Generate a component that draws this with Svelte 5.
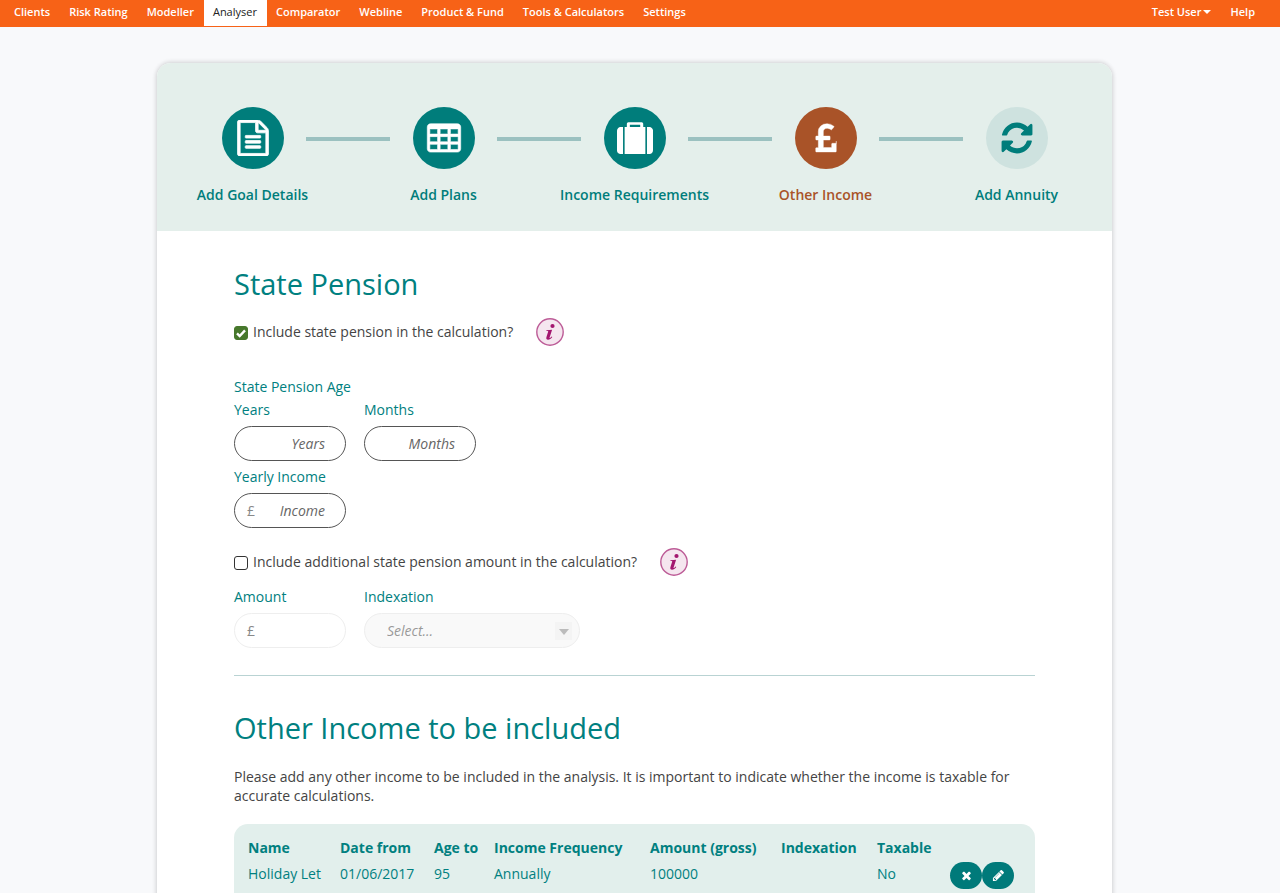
<script>
  const nav = ['Clients', 'Risk Rating', 'Modeller', 'Analyser', 'Comparator', 'Webline', 'Product & Fund', 'Tools & Calculators', 'Settings'];

  const cell = (x, y) => `M${x + 384} ${y + 224}v-192q0-14-9-23t-23-9h-320q-14 0-23 9t-9 23v192q0 14 9 23t23 9h320q14 0 23-9t9-23z`;
  const cells = [384, 768, 1152].flatMap((y) => [192, 704, 1216].map((x) => cell(x, y))).join('');

  const steps = [
    {
      label: 'Add Goal Details',
      state: 'done',
      view: '0 0 1792 1792',
      weight: 40,
      icon: 'M1596 380q28 28 48 76t20 88v1152q0 40-28 68t-68 28h-1344q-40 0-68-28t-28-68v-1600q0-40 28-68t68-28h896q40 0 88 20t76 48zm-444-244v376h376q-10-29-22-41l-313-313q-12-12-41-22zm384 1528v-1024h-416q-40 0-68-28t-28-68v-416h-768v1536h1280zm-1024-864q0-14 9-23t23-9h704q14 0 23 9t9 23v64q0 14-9 23t-23 9h-704q-14 0-23-9t-9-23v-64zm736 224q14 0 23 9t9 23v64q0 14-9 23t-23 9h-704q-14 0-23-9t-9-23v-64q0-14 9-23t23-9h704zm0 256q14 0 23 9t9 23v64q0 14-9 23t-23 9h-704q-14 0-23-9t-9-23v-64q0-14 9-23t23-9h704z'
    },
    {
      label: 'Add Plans',
      state: 'done',
      view: '0 -60 1792 1792',
      weight: 30,
      icon: cells + 'M1728 288v1088q0 66-47 113t-113 47h-1344q-66 0-113-47t-47-113v-1088q0-66 47-113t113-47h1344q66 0 113 47t47 113z'
    },
    {
      label: 'Income Requirements',
      state: 'done',
      view: '0 0 1792 1792',
      weight: 0,
      icon: 'M640 350h515v-110h-515zM300 350v1342h-120q-75 0-130-55t-50-130v-972q0-75 50-130t130-55zM1412 350v1342h-1032v-1342h110v-160q0-75 75-75h665q75 0 75 75v160zM1492 350h120q75 0 130 55t50 130v972q0 75-50 130t-130 55h-120z'
    },
    {
      label: 'Other Income',
      state: 'current',
      view: '0 80 1792 1792',
      weight: 20,
      icon: 'M1408 1131v509q0 14-9 23t-23 9h-960q-14 0-23-9t-9-23v-150q0-13 9.500-22.500t22.500-9.500h97v-383h-95q-14 0-23-9.500t-9-22.500v-131q0-14 9-23t23-9h95v-223q0-171 123.500-282t314.500-111q185 0 335 125 9 8 10 20.500t-7 22.500l-103 127q-9 11-22 12-13 2-23-7-5-5-26-19t-69-32-93-18q-85 0-137 47t-52 123v215h305q13 0 22.500 9t9.500 23v131q0 13-9.500 22.500t-22.500 9.500h-305v379h414v-181q0-13 9-22.500t23-9.500h162q14 0 23 9.500t9 22.500z'
    },
    {
      label: 'Add Annuity',
      state: 'next',
      view: '0 0 1792 1792',
      weight: 0,
      icon: 'M1639 1056q0 5-1 7-64 268-268 434.500t-478 166.500q-146 0-282.500-55t-243.500-157l-129 129q-19 19-45 19t-45-19-19-45v-448q0-26 19-45t45-19h448q26 0 45 19t19 45-19 45l-137 137q71 66 161 102t187 36q134 0 250-65t186-179q11-17 53-117 8-23 30-23h192q13 0 22.500 9.500t9.500 22.500zm25-800v448q0 26-19 45t-45 19h-448q-26 0-45-19t-19-45 19-45l138-138q-148-137-349-137-134 0-250 65t-186 179q-11 17-53 117-8 23-30 23h-199q-13 0-22.500-9.500t-9.500-22.500v-7q65-268 270-434.500t480-166.500q146 0 284 55.500t245 156.500l130-129q19-19 45-19t45 19 19 45z'
    }
  ];

  let includeState = $state(true);
  let includeAdditional = $state(false);

  const incomes = [
    { name: 'Holiday Let', from: '01/06/2017', age: '95', frequency: 'Annually', amount: '100000', indexation: '', taxable: 'No' }
  ];
</script>

{#snippet info(label)}
  <button type="button" class="info" aria-label={label}>
    <svg viewBox="0 0 28 28" width="28" height="28" aria-hidden="true">
      <circle cx="14" cy="14" r="13.200" fill="#f5e6ef" stroke="#bd5c97" stroke-width="1.400" />
      <circle cx="16.500" cy="8" r="2.100" fill="#a3166f" />
      <path d="M10.500 12.300l5.600-.6-2.500 7.700c-.2.700.1.800.5.500l1.500-1.400.7.500c-1.400 1.900-2.900 2.900-4.300 2.800-1.500-.1-2-1.200-1.600-2.500l1.800-5.700c.1-.4-.1-.6-.5-.6l-1.400.1z" fill="#a3166f" />
    </svg>
  </button>
{/snippet}

<nav class="topbar">
  <div class="links">
    {#each nav as item}
      <a href="#top" class:active={item === 'Analyser'}>{item}</a>
    {/each}
  </div>
  <div class="links">
    <a href="#user">Test User<span class="caret"></span></a>
    <a href="#help">Help</a>
  </div>
</nav>

<main>
  <div class="card">
    <ol class="steps">
      {#each steps as step}
        <li class={step.state}>
          <a href="#step">
            <span class="disc">
              <svg viewBox={step.view} width="36" height="36" aria-hidden="true"><path d={step.icon} fill="currentColor" fill-rule="evenodd" stroke="currentColor" stroke-width={step.weight} /></svg>
            </span>
            <span>{step.label}</span>
          </a>
        </li>
      {/each}
    </ol>

    <div class="content">
      <section class="pension">
        <h1>State Pension</h1>
        <div class="check">
          <input type="checkbox" id="include-state" bind:checked={includeState} />
          <label for="include-state">Include state pension in the calculation?</label>
          {@render info('About the state pension')}
        </div>

        <fieldset>
          <legend>State Pension Age</legend>
          <div class="fields">
            <div class="field">
              <label for="years">Years</label>
              <span class="box"><input id="years" type="text" placeholder="Years" /></span>
            </div>
            <div class="field">
              <label for="months">Months</label>
              <span class="box"><input id="months" type="text" placeholder="Months" /></span>
            </div>
          </div>
        </fieldset>
        <div class="field">
          <label for="income">Yearly Income</label>
          <span class="box"><span class="pound">£</span><input id="income" type="text" placeholder="Income" /></span>
        </div>

        <div class="check additional">
          <input type="checkbox" id="include-additional" bind:checked={includeAdditional} />
          <label for="include-additional">Include additional state pension amount in the calculation?</label>
          {@render info('About the additional state pension')}
        </div>
        <div class="fields">
          <div class="field">
            <label for="amount">Amount</label>
            <span class="box" class:off={!includeAdditional}><span class="pound">£</span><input id="amount" type="text" disabled={!includeAdditional} /></span>
          </div>
          <div class="field">
            <label for="indexation">Indexation</label>
            <span class="box choice" class:off={!includeAdditional}>
              <select id="indexation" disabled={!includeAdditional}><option>Select...</option></select>
              <span class="arrow"><span class="caret"></span></span>
            </span>
          </div>
        </div>
      </section>

      <section class="others">
        <h1>Other Income to be included</h1>
        <p>Please add any other income to be included in the analysis. It is important to indicate whether the income is taxable for accurate calculations.</p>
        <div class="panel">
          <table>
            <thead>
              <tr>
                <th class="name">Name</th><th class="from">Date from</th><th class="age">Age to</th><th class="frequency">Income Frequency</th><th class="gross">Amount (gross)</th><th class="index">Indexation</th><th class="taxable">Taxable</th><td></td>
              </tr>
            </thead>
            <tbody>
              {#each incomes as row}
                <tr>
                  <td>{row.name}</td><td>{row.from}</td><td>{row.age}</td><td>{row.frequency}</td><td>{row.amount}</td><td>{row.indexation}</td><td>{row.taxable}</td>
                  <td>
                    <div class="actions">
                      <button type="button" aria-label="Remove">
                        <svg viewBox="0 0 1792 1792" width="13" height="13" aria-hidden="true"><path fill="currentColor" d="M1490 1322q0 40-28 68l-136 136q-28 28-68 28t-68-28l-294-294-294 294q-28 28-68 28t-68-28l-136-136q-28-28-28-68t28-68l294-294-294-294q-28-28-28-68t28-68l136-136q28-28 68-28t68 28l294 294 294-294q28-28 68-28t68 28l136 136q28 28 28 68t-28 68l-294 294 294 294q28 28 28 68z" /></svg>
                      </button>
                      <button type="button" aria-label="Edit">
                        <svg viewBox="0 0 1792 1792" width="13" height="13" aria-hidden="true"><path fill="currentColor" d="M491 1536l91-91-235-235-91 91v107h128v128h107zm523-928q0-22-22-22-10 0-17 7l-542 542q-7 7-7 17 0 22 22 22 10 0 17-7l542-542q7-7 7-17zm-54-192l416 416-832 832h-416v-416zm683 96q0 53-37 90l-166 166-416-416 166-165q36-38 90-38 53 0 91 38l235 234q37 39 37 91z" /></svg>
                      </button>
                    </div>
                  </td>
                </tr>
              {/each}
            </tbody>
          </table>
        </div>
      </section>
    </div>
  </div>
</main>

<style>
  :global(body) {
    background: #f8f9fb;
    color: #444;
    font: 400 14px/19px 'Open Sans', sans-serif;
  }
  :global(*) { box-sizing: border-box; }

  .topbar {
    display: flex;
    justify-content: space-between;
    background: #f76217;
    padding: 0 15px 1px 5px;
  }
  .links { display: flex; }
  .topbar a {
    padding: 2px 10px 4px 9px;
    color: #fff;
    font-size: 11px;
    font-weight: 600;
    line-height: 20px;
    text-decoration: none;
  }
  .topbar a.active {
    background: #fff;
    color: #222;
    font-weight: 400;
  }
  .caret {
    display: inline-block;
    border: 4px solid transparent;
    border-top-color: currentColor;
    border-bottom: 0;
    margin-left: 2px;
    vertical-align: 2px;
  }

  main { padding: 36px 11px 0 0; }
  .card {
    max-width: 955px;
    margin: 0 auto;
    border-radius: 14px;
    background: #fff;
    box-shadow: 0 0 4px 1px rgba(0, 0, 0, 0.16);
  }

  .steps {
    display: flex;
    list-style: none;
    margin: 0;
    padding: 44px 0 27px;
    border-radius: 14px 14px 0 0;
    background: #e4efeb;
  }
  .steps li {
    flex: 1;
    position: relative;
    text-align: center;
    color: #007d7b;
  }
  .steps li + li::before {
    content: '';
    position: absolute;
    top: 30px;
    left: -42px;
    width: 84px;
    height: 4px;
    background: #9bc1c0;
  }
  .steps a {
    display: flex;
    flex-direction: column;
    align-items: center;
    gap: 16px;
    color: inherit;
    font-weight: 600;
    text-decoration: none;
  }
  .disc {
    display: grid;
    place-items: center;
    width: 62px;
    height: 62px;
    border-radius: 50%;
    background: #007d7b;
    color: #fff;
  }
  .steps li.current { color: #a95328; }
  .current .disc { background: #a95328; }
  .next .disc { background: #cee2df; color: #007d7b; }

  .content { padding: 32px 77px 40px; }
  h1 {
    margin: 0;
    color: #008080;
    font-size: 29px;
    font-weight: 400;
    line-height: 42px;
  }

  .check {
    display: flex;
    align-items: center;
    gap: 5px;
    margin-top: 13px;
  }
  .check label { padding-bottom: 2px; }
  .check input {
    appearance: none;
    width: 14px;
    height: 14px;
    margin: 2px 0 0;
    border: 1px solid #333;
    border-radius: 3px;
    background: #fff;
  }
  .check input:checked {
    border-color: #47782c;
    background: #47782c url("data:image/svg+xml,%3Csvg xmlns='http://www.w3.org/2000/svg' viewBox='0 0 12 12'%3E%3Cpath d='M2 6.300l2.700 2.700 5.300-5.600' fill='none' stroke='white' stroke-width='2.400'/%3E%3C/svg%3E") center / 12px no-repeat;
  }
  .info {
    width: 28px;
    height: 28px;
    margin-left: 18px;
    padding: 0;
    border: 0;
    background: none;
  }
  .info svg { display: block; }

  fieldset {
    margin: 31px 0 6px;
    padding: 0;
    border: 0;
  }
  legend {
    padding: 0;
    margin-bottom: 4px;
    color: #008080;
  }
  .fields { display: flex; gap: 18px; }
  .field {
    display: flex;
    flex-direction: column;
    align-items: flex-start;
    gap: 7px;
  }
  .field label { color: #008080; }
  .box {
    display: flex;
    align-items: center;
    width: 112px;
    height: 35px;
    padding: 0 20px 0 12px;
    border: 1px solid #555;
    border-radius: 18px;
    background: #fff;
  }
  .box input {
    flex: 1;
    min-width: 0;
    padding: 0;
    border: 0;
    background: none;
    font: inherit;
    text-align: right;
  }
  .box input::placeholder {
    color: #666;
    font-style: italic;
    opacity: 1;
  }
  .pound { color: #888; }
  .box.off { border-color: #eee; }
  .choice {
    width: 216px;
    padding: 0 7px 0 22px;
  }
  .choice.off { background: #f9f9f9; }
  select {
    flex: 1;
    min-width: 0;
    appearance: none;
    padding: 0;
    border: 0;
    background: none;
    color: #999;
    font: inherit;
    font-style: italic;
    opacity: 1;
  }
  .arrow {
    display: grid;
    place-items: center;
    width: 17px;
    height: 18px;
    background: #f4f4f4;
    color: #bbb;
    pointer-events: none;
  }
  .arrow .caret {
    margin: 2px 0 0;
    border-width: 6px 5px 0;
  }
  .check.additional { margin: 20px 0 11px; }
  .pension {
    padding-bottom: 27px;
    border-bottom: 1px solid #b9d3d3;
  }

  .others { padding-top: 31px; }
  p { margin: 18px 0 19px; }
  .panel {
    overflow: hidden;
    padding: 11px 12px 30px;
    border-radius: 14px;
    background: #e2efec;
  }
  table {
    width: 100%;
    table-layout: fixed;
    border-collapse: collapse;
    color: #008080;
    text-align: left;
  }
  th, td {
    padding: 2px;
    line-height: 22px;
    vertical-align: top;
    white-space: nowrap;
  }
  th { font-weight: 700; }
  .name { width: 92px; }
  .from { width: 94px; }
  .age { width: 60px; }
  .frequency { width: 156px; }
  .gross { width: 131px; }
  .index { width: 96px; }
  .taxable { width: 73px; }
  tbody td:last-child { padding-top: 1px; }
  .actions { display: flex; }
  .actions button {
    display: grid;
    place-items: center;
    width: 32px;
    height: 27px;
    padding: 0;
    border: 0;
    border-radius: 14px;
    background: #007a7a;
    color: #fff;
  }
</style>
